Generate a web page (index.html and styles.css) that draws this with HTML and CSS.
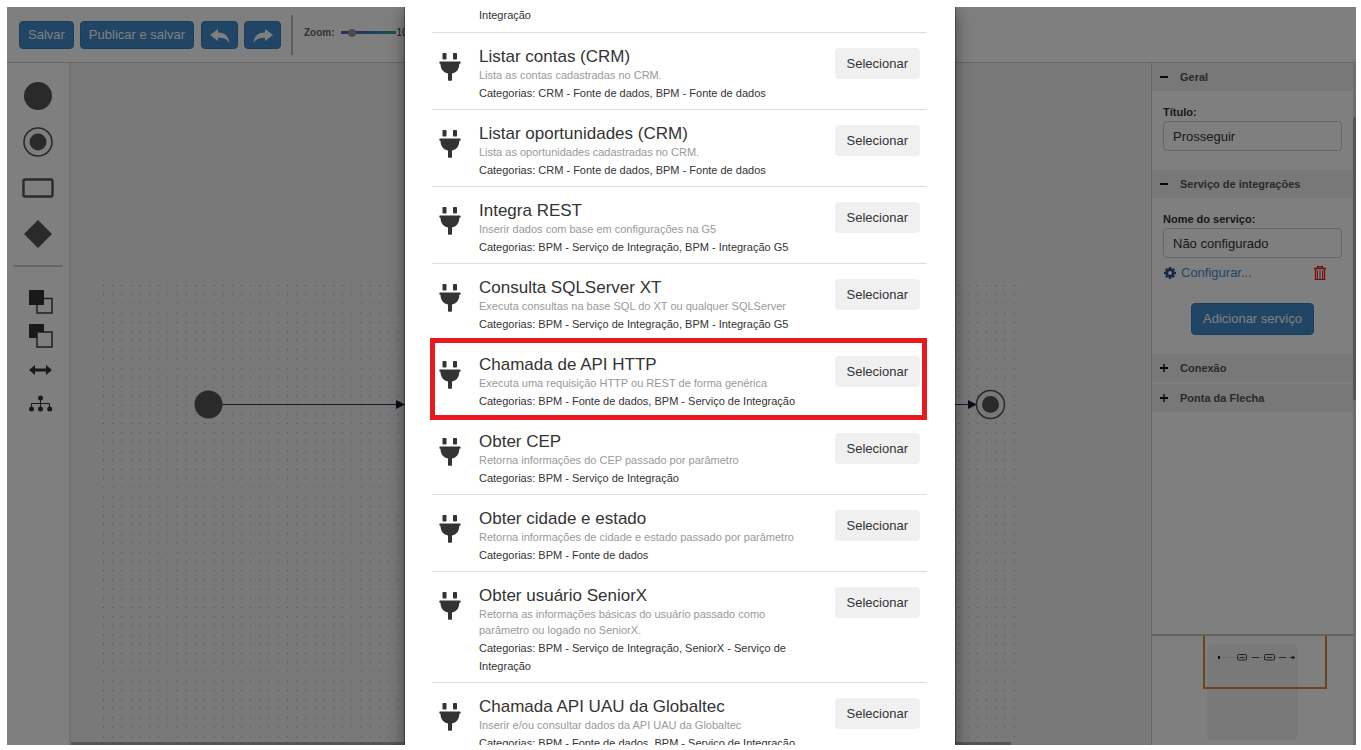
FILE: index.html
```html
<!DOCTYPE html>
<html lang="pt-BR">
<head>
<meta charset="utf-8">
<title>Editor de processos</title>
<link rel="stylesheet" href="styles.css">
</head>
<body>
<svg class="defs" aria-hidden="true">
  <symbol id="plug" viewBox="0 0 22 28">
    <rect x="3.500" y="0" width="4" height="6.500" rx="0.800"/>
    <rect x="14" y="0" width="4" height="6.500" rx="0.800"/>
    <path d="M1 8.500h20a.6.6 0 0 1 .6.6v1a.6.6 0 0 1-.6.6h-.7c0 5.600-3 8.900-7.300 9.800v6.500a.7.7 0 0 1-.7.7h-2.600a.7.7 0 0 1-.7-.7v-6.500C4.700 19.600 1.500 16.300 1.500 10.700H1a.6.6 0 0 1-.6-.6v-1A.6.6 0 0 1 1 8.500z"/>
  </symbol>
</svg>
<div class="app">
  <header class="toolbar">
    <button class="btn primary">Salvar</button>
    <button class="btn primary">Publicar e salvar</button>
    <div class="history">
      <button class="btn primary arrow" aria-label="Desfazer"><svg width="20" height="14" viewBox="0 0 20 14"><path d="M0 6 8 0v3.500c7 0 10.500 4 11.500 10C16.500 9.500 13 8.600 8 8.700V12z"/></svg></button>
      <button class="btn primary arrow" aria-label="Refazer"><svg width="20" height="14" viewBox="0 0 20 14"><path d="M20 6 12 0v3.500C5 3.500 1.500 7.500.5 13.500 3.500 9.500 7 8.600 12 8.700V12z"/></svg></button>
    </div>
    <div class="zoom">
      <label for="zoom">Zoom:</label>
      <input id="zoom" type="range" min="0" max="100" value="16">
      <span class="zoom-value">100%</span>
    </div>
  </header>
  <main class="workspace">
    <nav class="palette">
      <button class="shape" aria-label="Início"><svg width="30" height="30"><circle cx="15" cy="15" r="14"/></svg></button>
      <button class="shape" aria-label="Fim"><svg width="30" height="30"><circle cx="15" cy="15" r="14" fill="none" stroke="#555" stroke-width="1.6"/><circle cx="15" cy="15" r="8.500"/></svg></button>
      <button class="shape" aria-label="Tarefa"><svg width="32" height="20"><rect x="1.500" y="1.500" width="29" height="17" rx="1.500" fill="none" stroke="#555" stroke-width="2.400"/></svg></button>
      <button class="shape" aria-label="Decisão"><svg width="28" height="28"><path d="M14 0 28 14 14 28 0 14z"/></svg></button>
      <hr>
      <button class="tool" aria-label="Trazer para frente"><svg width="24" height="24"><rect x="8" y="8.500" width="15" height="14.500" fill="none" stroke="#333" stroke-width="1.400"/><rect x="0" y="0" width="15" height="15"/></svg></button>
      <button class="tool" aria-label="Enviar para trás"><svg width="24" height="24"><rect x="0" y="0" width="15" height="14"/><rect x="8" y="8" width="15" height="15" fill="#fff" stroke="#333" stroke-width="1.400"/></svg></button>
      <button class="tool" aria-label="Alinhar"><svg width="24" height="10"><path d="M0 5 6 0v3.500h11V0l6 5-6 5V6.500H6V10z"/></svg></button>
      <button class="tool" aria-label="Organizar"><svg width="24" height="18"><path d="M2.500 13V8.500h18V13M11.500 3v11" fill="none" stroke="#333"/><circle cx="11.500" cy="3" r="2.500"/><circle cx="2.500" cy="14" r="2.500"/><circle cx="11.500" cy="14" r="2.500"/><circle cx="20.700" cy="14" r="2.500"/></svg></button>
    </nav>
    <section class="canvas">
      <svg class="diagram">
        <defs><pattern id="dots" x="32" y="222" width="9.200" height="9.200" patternUnits="userSpaceOnUse"><rect width="1" height="1" fill="#9c9c9c"/></pattern></defs>
        <rect x="32" y="222" width="915" height="600" fill="url(#dots)"/>
        <path d="M31.500 900V221.500H952.500V900" fill="none" stroke="#fff" stroke-opacity=".5" stroke-dasharray="1 1"/>
        <path d="M150 341.500h190M880 341.500h20" stroke="#33334d" stroke-width="1.200"/>
        <path d="M325 337l9 4.500-9 4.500zM897 337l9 4.500-9 4.500z" fill="#1a1a33"/>
        <circle cx="137.500" cy="341.500" r="14" fill="#555"/>
        <circle cx="919.500" cy="341.500" r="14" fill="none" stroke="#555" stroke-width="1.500"/>
        <circle cx="919.500" cy="341.500" r="8.500" fill="#555"/>
      </svg>
      <div class="hscroll"></div>
    </section>
    <aside class="side">
      <div class="properties">
        <h2><span class="minus"></span>Geral</h2>
        <div class="group">
          <label for="titulo">Título:</label>
          <input id="titulo" type="text" value="Prosseguir">
        </div>
        <h2><span class="minus"></span>Serviço de integrações</h2>
        <div class="group service">
          <label for="servico">Nome do serviço:</label>
          <input id="servico" type="text" value="Não configurado">
          <div class="actions">
            <a href="#"><svg width="12" height="12" viewBox="0 0 12 12"><circle cx="6" cy="6" r="3.200" fill="none" stroke="#265080" stroke-width="2.600"/><path d="M6 0v2M6 10v2M0 6h2M10 6h2M1.800 1.800l1.400 1.400M8.800 8.800l1.400 1.400M10.200 1.800 8.800 3.200M3.200 8.800l-1.400 1.400" stroke="#265080" stroke-width="2.400"/></svg>Configurar...</a>
            <button class="trash" aria-label="Excluir"><svg width="12" height="14" fill="none" stroke="#e02020"><path d="M0 2.500h12M3.500 2.500v-2h5v2M1.500 3v10.500h9V3" stroke-width="1.400"/><path d="M3.500 4.500v8M6 4.500v8M8.500 4.500v8"/></svg></button>
          </div>
          <button class="btn primary add">Adicionar serviço</button>
        </div>
        <h2><span class="minus plus"></span>Conexão</h2>
        <h2><span class="minus plus"></span>Ponta da Flecha</h2>
      </div>
      <div class="minimap">
        <svg width="124" height="106">
          <rect x="5" y="9" width="89" height="94" rx="4" fill="#f2f2f2" stroke="#ededed"/>
          <path d="M15 21.500h80" stroke="#ccc" stroke-width=".6"/>
          <g fill="#e8e8e8" stroke="#444"><rect x="34.500" y="18.500" width="9" height="5.500" rx="1"/><rect x="61.500" y="18.500" width="10" height="5.500" rx="1"/></g>
          <path d="M36.500 21.500h5M49 21.500h7M64 21.500h5M76 21.500h7M87 21.500h5" stroke="#555"/>
          <rect x="15" y="20" width="2" height="3" fill="#222"/><circle cx="90" cy="21.500" r="1.500" fill="#444"/>
          <path d="M1 0v52h122V0" fill="none" stroke="#d98a30" stroke-width="2"/>
        </svg>
      </div>
    </aside>
    <div class="vscroll"><div class="thumb"></div></div>
  </main>
  <div class="overlay">
    <div class="modal" role="dialog" aria-label="Selecionar serviço">
      <ul class="services">
        <li class="tail"><p class="cats">Integração</p></li>
        <li><svg class="plug"><use href="#plug"/></svg><div class="info"><h3>Listar contas (CRM)</h3><p class="desc">Lista as contas cadastradas no CRM.</p><p class="cats">Categorias: CRM - Fonte de dados, BPM - Fonte de dados</p></div><button class="btn select">Selecionar</button></li>
        <li><svg class="plug"><use href="#plug"/></svg><div class="info"><h3>Listar oportunidades (CRM)</h3><p class="desc">Lista as oportunidades cadastradas no CRM.</p><p class="cats">Categorias: CRM - Fonte de dados, BPM - Fonte de dados</p></div><button class="btn select">Selecionar</button></li>
        <li><svg class="plug"><use href="#plug"/></svg><div class="info"><h3>Integra REST</h3><p class="desc">Inserir dados com base em configurações na G5</p><p class="cats">Categorias: BPM - Serviço de Integração, BPM - Integração G5</p></div><button class="btn select">Selecionar</button></li>
        <li><svg class="plug"><use href="#plug"/></svg><div class="info"><h3>Consulta SQLServer XT</h3><p class="desc">Executa consultas na base SQL do XT ou qualquer SQLServer</p><p class="cats">Categorias: BPM - Serviço de Integração, BPM - Integração G5</p></div><button class="btn select">Selecionar</button></li>
        <li class="highlight"><svg class="plug"><use href="#plug"/></svg><div class="info"><h3>Chamada de API HTTP</h3><p class="desc">Executa uma requisição HTTP ou REST de forma genérica</p><p class="cats">Categorias: BPM - Fonte de dados, BPM - Serviço de Integração</p></div><button class="btn select">Selecionar</button></li>
        <li><svg class="plug"><use href="#plug"/></svg><div class="info"><h3>Obter CEP</h3><p class="desc">Retorna informações do CEP passado por parâmetro</p><p class="cats">Categorias: BPM - Serviço de Integração</p></div><button class="btn select">Selecionar</button></li>
        <li><svg class="plug"><use href="#plug"/></svg><div class="info"><h3>Obter cidade e estado</h3><p class="desc">Retorna informações de cidade e estado passado por parâmetro</p><p class="cats">Categorias: BPM - Fonte de dados</p></div><button class="btn select">Selecionar</button></li>
        <li><svg class="plug"><use href="#plug"/></svg><div class="info"><h3>Obter usuário SeniorX</h3><p class="desc">Retorna as informações básicas do usuário passado como parâmetro ou logado no SeniorX.</p><p class="cats">Categorias: BPM - Serviço de Integração, SeniorX - Serviço de Integração</p></div><button class="btn select">Selecionar</button></li>
        <li><svg class="plug"><use href="#plug"/></svg><div class="info"><h3>Chamada API UAU da Globaltec</h3><p class="desc">Inserir e/ou consultar dados da API UAU da Globaltec</p><p class="cats">Categorias: BPM - Fonte de dados, BPM - Serviço de Integração</p></div><button class="btn select">Selecionar</button></li>
      </ul>
    </div>
  </div>
</div>
</body>
</html>
```
FILE: styles.css
```css
* { box-sizing: border-box; }
body {
  margin: 0;
  height: 100vh;
  padding: 7px 5px 5px 7px;
  background: #fff;
  color: #333;
  font: 13px/20px "Liberation Sans", Arial, sans-serif;
}
h2, h3, p, ul { margin: 0; padding: 0; }
.defs { position: absolute; width: 0; height: 0; }
.app {
  position: relative;
  height: 100%;
  display: flex;
  flex-direction: column;
  overflow: hidden;
  background: #fff;
}
.btn {
  border: 0;
  border-radius: 4px;
  padding: 0 12px;
  font: inherit;
  color: #333;
  white-space: nowrap;
}
.primary {
  background: #428bca;
  border: 1px solid #357ebd;
  color: #fff;
}

/* Toolbar */
.toolbar {
  flex: none;
  display: flex;
  align-items: center;
  gap: 6px;
  height: 56px;
  padding-left: 12px;
  border-bottom: 1px solid #ccc;
}
.toolbar .btn { height: 28px; padding: 0 8px; }
.history { display: flex; gap: 6px; padding: 6px 10px 6px 1px; border-right: 2px solid #bbb; }
.toolbar .arrow { width: 37px; }
.arrow svg { display: block; margin: 2px auto 0; fill: #fff; }
.zoom { display: flex; align-items: center; gap: 6px; height: 16px; margin: 0 0 4px 5px; }
.zoom label { font-size: 10px; font-weight: bold; color: #666; }
.zoom input {
  appearance: none;
  width: 55px;
  height: 3px;
  margin: 0;
  background: linear-gradient(90deg, #6a4fb0, #3d7fb8, #2aa89a);
}
.zoom input::-webkit-slider-thumb {
  appearance: none;
  width: 8px;
  height: 8px;
  border-radius: 50%;
  background: #999;
}
.zoom-value { font-size: 10px; margin-left: -5px; }

/* Workspace */
.workspace { flex: 1; display: flex; min-height: 0; }
.palette {
  flex: none;
  display: flex;
  flex-direction: column;
  width: 64px;
  padding-top: 10px;
  border-right: 2px solid #e3e3e3;
  fill: #555;
}
.palette button {
  display: flex;
  align-items: center;
  justify-content: center;
  height: 46px;
  padding: 0;
  border: 0;
  background: none;
}
.palette button.tool { height: 34px; padding-left: 6px; fill: #333; }
.palette hr { width: 50px; height: 2px; margin: 8px 6px 18px; border: 0; background: #ccc; }
.canvas { flex: 1; min-width: 0; display: flex; flex-direction: column; background: #f2f2f2; }
.diagram { flex: 1; width: 100%; min-height: 0; }
.hscroll { height: 3px; width: 87%; background: #aaa; }

/* Property panel */
.side { flex: none; display: flex; flex-direction: column; width: 202px; border-left: 1px solid #ccc; }
.properties { flex: 1; min-height: 0; overflow: hidden; border-bottom: 2px solid #c4c4c4; }
.properties h2 {
  display: flex;
  align-items: center;
  gap: 12px;
  height: 28px;
  padding-left: 8px;
  margin-bottom: 2px;
  background: #f0f0f0;
  color: #555;
  font-size: 11px;
}
.minus {
  width: 8px;
  height: 8px;
  background: linear-gradient(#111, #111) center / 8px 2px no-repeat;
}
.plus {
  background: linear-gradient(#111, #111) center / 8px 2px no-repeat,
    linear-gradient(#555, #555) center / 2px 8px no-repeat;
}
.group { display: flex; flex-direction: column; padding: 10px 11px 19px; }
.group label { font-size: 11px; font-weight: bold; line-height: 18px; }
.group input {
  width: 100%;
  height: 30px;
  padding: 0 9px;
  border: 1px solid #ccc;
  border-radius: 4px;
  background: #fff;
  color: #333;
  font: inherit;
}
.actions { display: flex; justify-content: space-between; align-items: center; height: 30px; padding: 0 16px 0 1px; }
.actions a { display: flex; align-items: center; gap: 5px; color: #428bca; text-decoration: none; }
.trash { padding: 0; border: 0; background: none; line-height: 0; }
.add { align-self: center; height: 32px; margin-top: 15px; padding: 0 11px; }
.minimap { flex: none; display: flex; height: 109px; padding-left: 51px; }
.vscroll { flex: none; width: 3px; padding-top: 54px; background: #ddd; }
.thumb { height: 283px; border-radius: 2px; background: #aaa; }

/* Dialog */
.overlay {
  position: absolute;
  inset: 0;
  display: flex;
  justify-content: center;
  padding-right: 3px;
  background: rgba(0, 0, 0, .5);
}
.modal {
  flex: none;
  width: 550px;
  padding: 0 28px 0 27px;
  background: #fff;
  box-shadow: 0 0 0 1px rgba(0, 0, 0, .3), 0 5px 15px rgba(0, 0, 0, .5);
}
.services { list-style: none; }
.services li {
  position: relative;
  display: flex;
  align-items: flex-start;
  padding: 14px 7px 7px;
  border-bottom: 1px solid #ddd;
}
.services .tail { padding: 0 47px 9px; }
.services .tail .cats { margin: 0; line-height: 16px; }
.plug { flex: none; width: 22px; height: 28px; margin-top: 6px; fill: #333; }
.info { flex: 1; margin: 0 20px 0 18px; }
.info h3 { font-size: 17px; font-weight: normal; line-height: 20px; }
.desc { font-size: 11px; line-height: 16px; color: #999; }
.cats { margin-top: 1px; font-size: 11px; line-height: 18px; }
.select { height: 31px; margin-top: 1px; background: #f0f0f0; }
.highlight::after {
  content: "";
  position: absolute;
  inset: -3px 0 -3px -2px;
  border: 5px solid #e8191c;
  pointer-events: none;
}
```
